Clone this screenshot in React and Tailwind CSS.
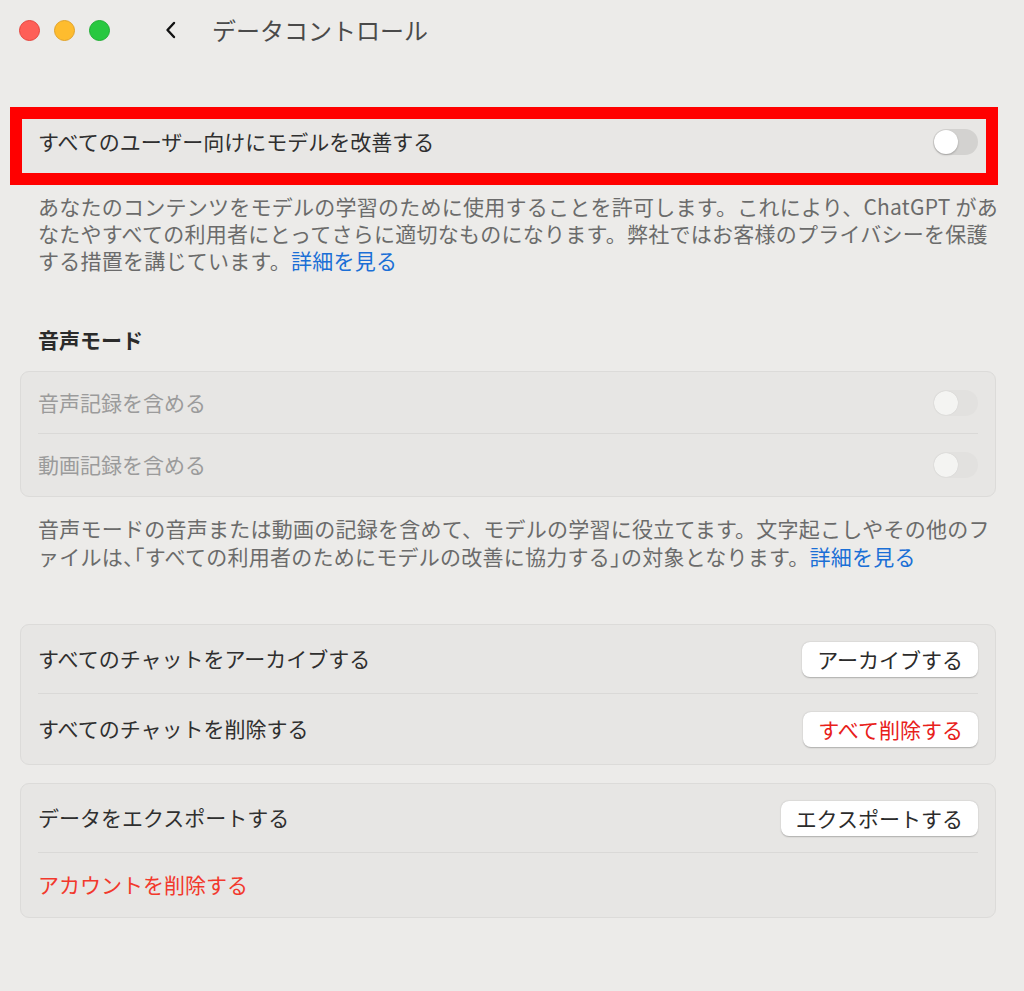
import React from "react";

const font = { fontFamily: '"Noto Sans CJK JP", "Noto Sans", sans-serif' };

// off-state switch
function Toggle({ disabled }) {
  return (
    <div
      className={`relative w-[45px] h-[26px] rounded-full ${
        disabled ? "bg-[#e2e1df]" : "bg-[#d3d2d0]"
      }`}
    >
      <div
        className={`absolute left-[1px] top-[1px] w-[24px] h-[24px] rounded-full ${
          disabled
            ? "bg-[#f4f4f2] shadow-[0_0_1px_rgba(0,0,0,0.15)]"
            : "bg-white shadow-[0_1px_2px_rgba(0,0,0,0.25)]"
        }`}
      />
    </div>
  );
}

function PillButton({ children, danger }) {
  return (
    <button
      className={`h-[35px] px-[15px] rounded-[8px] bg-white shadow-[0_0.5px_1.5px_rgba(0,0,0,0.25)] text-[21px] leading-none ${
        danger ? "text-[#e8201a]" : "text-[#2b2b2b]"
      }`}
    >
      {children}
    </button>
  );
}

function Card({ children }) {
  return (
    <div className="mx-[20px] mr-[28px] rounded-[9px] bg-[#e7e6e4] border border-[#dcdbd9] px-[17px]">
      {children}
    </div>
  );
}

export default function App() {
  return (
    <div style={font} className="min-h-[991px] w-[1024px] bg-[#ecebe9] text-[#2f2f2f]">
      {/* title bar */}
      <div className="h-[60px] flex items-center">
        <div className="flex items-center gap-[14px] pl-[19px]">
          <span className="w-[21px] h-[21px] rounded-full bg-[#fe5f57] border border-[#e5443d]" />
          <span className="w-[21px] h-[21px] rounded-full bg-[#febc2e] border border-[#e0a22a]" />
          <span className="w-[21px] h-[21px] rounded-full bg-[#28c840] border border-[#1fae33]" />
        </div>
        <svg className="ml-[53px]" width="16" height="20" viewBox="0 0 16 20" fill="none">
          <path d="M11 3 L4.5 10 L11 17" stroke="#111" strokeWidth="2.4" strokeLinecap="round" strokeLinejoin="round" />
        </svg>
        <h1 className="ml-[33px] text-[24px] leading-none text-[#4a4a4a] mb-[1px]">データコントロール</h1>
      </div>

      {/* highlighted row */}
      <div className="mt-[47px] ml-[10px] mr-[26px] border-[12px] border-[#ff0000]">
        <div className="h-[54px] bg-[#e8e7e5] flex items-center justify-between pl-[16px] pr-[8px] pb-[9px]">
          <span className="text-[21px] leading-none">すべてのユーザー向けにモデルを改善する</span>
          <Toggle />
        </div>
      </div>

      <p className="mt-[8px] pl-[38px] text-[21px] tracking-[0.25px] leading-[27px] text-[#6b6b6b] whitespace-nowrap">
        あなたのコンテンツをモデルの学習のために使用することを許可します。これにより、ChatGPT があ
        <br />
        なたやすべての利用者にとってさらに適切なものになります。弊社ではお客様のプライバシーを保護
        <br />
        する措置を講じています。<span className="text-[#1a6fd6]">詳細を見る</span>
      </p>

      <h2 className="mt-[52px] pl-[38px] text-[21px] leading-[27px] font-bold text-[#2b2b2b]">音声モード</h2>

      <div className="mt-[18px]">
        <Card>
          <div className="h-[62px] flex items-center justify-between border-b border-[#dad9d7]">
            <span className="text-[21px] text-[#9b9b9b]">音声記録を含める</span>
            <Toggle disabled />
          </div>
          <div className="h-[62px] flex items-center justify-between">
            <span className="text-[21px] text-[#9b9b9b]">動画記録を含める</span>
            <Toggle disabled />
          </div>
        </Card>
      </div>

      <p className="mt-[17px] pl-[38px] text-[21px] tracking-[0.25px] leading-[28px] text-[#6b6b6b] whitespace-nowrap">
        音声モードの音声または動画の記録を含めて、モデルの学習に役立てます。文字起こしやその他のフ
        <br />
        ァイルは<span className="tracking-[-10px]">、</span>「すべての利用者のためにモデルの改善に協力する
        <span className="tracking-[-10px]">」</span>の対象となります。
        <span className="text-[#1a6fd6]">詳細を見る</span>
      </p>

      <div className="mt-[54px]">
        <Card>
          <div className="h-[69px] flex items-center justify-between border-b border-[#dad9d7]">
            <span className="text-[21px]">すべてのチャットをアーカイブする</span>
            <PillButton>アーカイブする</PillButton>
          </div>
          <div className="h-[70px] flex items-center justify-between">
            <span className="text-[21px]">すべてのチャットを削除する</span>
            <PillButton danger>すべて削除する</PillButton>
          </div>
        </Card>
      </div>

      <div className="mt-[18px]">
        <Card>
          <div className="h-[69px] flex items-center justify-between border-b border-[#dad9d7]">
            <span className="text-[21px]">データをエクスポートする</span>
            <PillButton>エクスポートする</PillButton>
          </div>
          <div className="h-[64px] flex items-center">
            <span className="text-[21px] text-[#f2382c]">アカウントを削除する</span>
          </div>
        </Card>
      </div>
    </div>
  );
}
